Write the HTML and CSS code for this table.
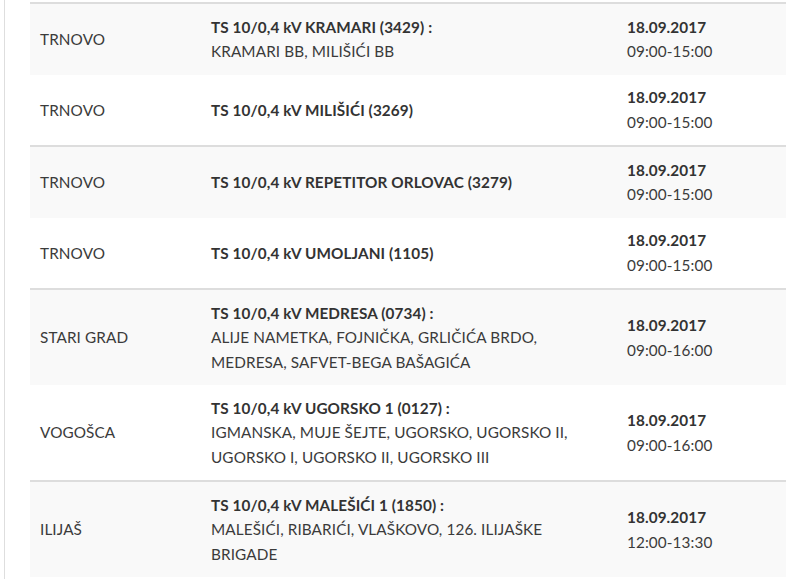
FILE: index.html
```html
<!DOCTYPE html>
<html lang="bs">
<head>
<meta charset="utf-8">
<title>Isključenja</title>
<link rel="stylesheet" href="styles.css">
</head>
<body>
<div class="page">
  <table class="outages">
    <colgroup>
      <col class="c-place">
      <col class="c-station">
      <col class="c-time">
    </colgroup>
    <tbody>
      <tr class="odd">
        <td>TRNOVO</td>
        <td><b>TS 10/0,4 kV KRAMARI (3429) :</b><br>KRAMARI BB, MILIŠIĆI BB</td>
        <td><b>18.09.2017</b><br>09:00-15:00</td>
      </tr>
      <tr>
        <td>TRNOVO</td>
        <td><b>TS 10/0,4 kV MILIŠIĆI (3269)</b></td>
        <td><b>18.09.2017</b><br>09:00-15:00</td>
      </tr>
      <tr class="odd">
        <td>TRNOVO</td>
        <td><b>TS 10/0,4 kV REPETITOR ORLOVAC (3279)</b></td>
        <td><b>18.09.2017</b><br>09:00-15:00</td>
      </tr>
      <tr>
        <td>TRNOVO</td>
        <td><b>TS 10/0,4 kV UMOLJANI (1105)</b></td>
        <td><b>18.09.2017</b><br>09:00-15:00</td>
      </tr>
      <tr class="odd">
        <td>STARI GRAD</td>
        <td><b>TS 10/0,4 kV MEDRESA (0734) :</b><br>ALIJE NAMETKA, FOJNIČKA, GRLIČIĆA BRDO,<br>MEDRESA, SAFVET-BEGA BAŠAGIĆA</td>
        <td><b>18.09.2017</b><br>09:00-16:00</td>
      </tr>
      <tr>
        <td>VOGOŠCA</td>
        <td><b>TS 10/0,4 kV UGORSKO 1 (0127) :</b><br>IGMANSKA, MUJE ŠEJTE, UGORSKO, UGORSKO II,<br>UGORSKO I, UGORSKO II, UGORSKO III</td>
        <td><b>18.09.2017</b><br>09:00-16:00</td>
      </tr>
      <tr class="odd">
        <td>ILIJAŠ</td>
        <td><b>TS 10/0,4 kV MALEŠIĆI 1 (1850) :</b><br>MALEŠIĆI, RIBARIĆI, VLAŠKOVO, 126. ILIJAŠKE<br>BRIGADE</td>
        <td><b>18.09.2017</b><br>12:00-13:30</td>
      </tr>
    </tbody>
  </table>
</div>
</body>
</html>
```
FILE: styles.css
```css
html, body {
  margin: 0;
  padding: 0;
  background: #ffffff;
}
body {
  font-family: Lato, "Liberation Sans", sans-serif;
  font-size: 15.3px;
  letter-spacing: 0.1px;
  color: #3b3b3b;
}
.page {
  margin-left: 4px;
  border-left: 1px solid #dedede;
  min-height: 579px;
  padding: 2px 0 0 25px;
  box-sizing: border-box;
  width: 782px;
}
.outages {
  width: 756px;
  border-collapse: collapse;
  table-layout: fixed;
}
.c-place { width: 171px; }
.c-station { width: 416px; }
.c-time { width: 169px; }
.outages td {
  padding: 10.75px 10px;
  line-height: 24.5px;
  vertical-align: middle;
}
.outages tr.odd td {
  background: #f9f9f9;
  border-top: 2px solid #dddddd;
}
.outages b {
  font-weight: 700;
  color: #333333;
}
```
